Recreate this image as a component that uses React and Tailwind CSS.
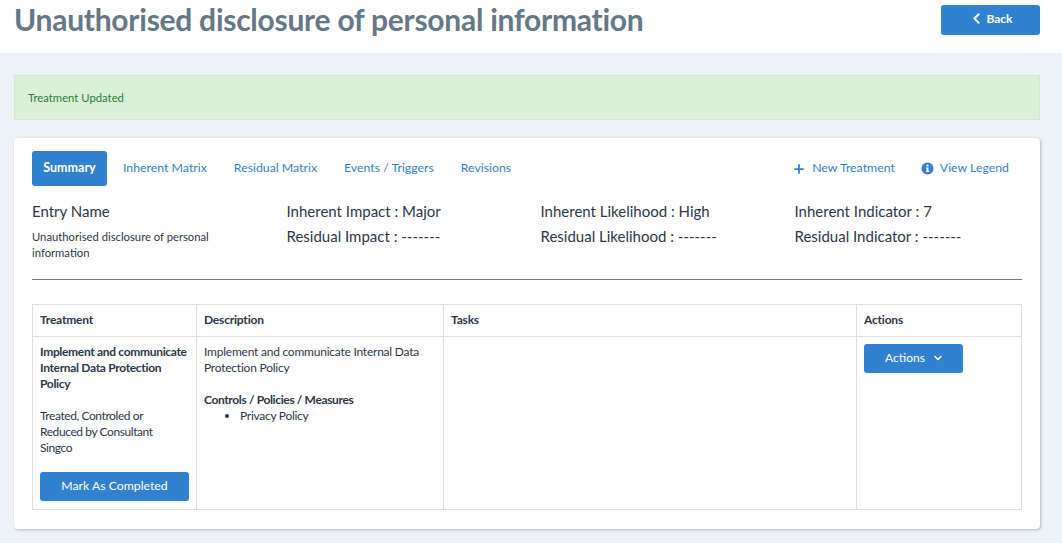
import { ChevronLeft, ChevronDown, Plus } from "lucide-react";

const InfoIcon = () => (
  <svg width="13" height="13" viewBox="0 0 13 13" className="mt-[2px] shrink-0">
    <circle cx="6.5" cy="6.5" r="6" fill="#3182ce" />
    <rect x="5.6" y="2.6" width="1.9" height="1.9" fill="#fff" />
    <path d="M4.9 5.5h2.6v3.3h.8v1.1H4.9V8.8h.8V6.6h-.8z" fill="#fff" />
  </svg>
);

const TabLink = ({ children, className = "" }) => (
  <a className={"h-[35px] flex items-center pb-[2px] text-[12.3px] text-[#3182ce] " + className}>{children}</a>
);

const App = () => {
  return (
    <div className="h-[543px] overflow-hidden bg-[#edf2f7] text-[12px] leading-4 text-[#2d3748] font-['Lato','Liberation_Sans',sans-serif]">
      <header className="h-[53px] bg-white pl-[14px] pr-[22px] flex items-start justify-between">
        <h1 className="text-[30px] leading-[38px] font-bold tracking-[-0.26px] text-[#667785]">Unauthorised disclosure of personal information</h1>
        <button className="mt-[5px] w-[99px] h-[30px] pb-[3px] rounded-[3px] bg-[#3182ce] text-white font-bold flex items-center justify-center gap-[1px]">
          <ChevronLeft size={17} strokeWidth={2.75} />
          Back
        </button>
      </header>

      <main className="pt-[22px] px-[14px] pr-[22px]">
        <div className="h-[45px] flex items-center px-[13px] bg-[#daf0d8] border border-[#cfe9cc] text-[#2f7d32] text-[11.3px]">
          Treatment Updated
        </div>

        <section className="mt-[18px] h-[391px] rounded-[4px] bg-white shadow-[1px_1px_3px_rgba(0,0,0,0.25)] px-[18px] pt-[13px]">
          <nav className="flex items-center">
            <a className="h-[35px] w-[75px] pb-[2px] rounded-[3px] bg-[#3182ce] text-[12.5px] text-white font-bold flex items-center justify-center">Summary</a>
            <TabLink className="ml-[16px]">Inherent Matrix</TabLink>
            <TabLink className="ml-[27px]">Residual Matrix</TabLink>
            <TabLink className="ml-[27px]">Events / Triggers</TabLink>
            <TabLink className="ml-[27px]">Revisions</TabLink>
            <TabLink className="ml-auto gap-[6px]">
              <Plus size={14} strokeWidth={3} className="mt-[2px]" />
              New Treatment
            </TabLink>
            <TabLink className="ml-[26px] mr-[13px] gap-[6px]">
              <InfoIcon />
              View Legend
            </TabLink>
          </nav>

          <div className="mt-[13px] grid grid-cols-[254.5px_254px_254px_1fr] text-[15px] leading-[25px] h-[69px]">
            <div>
              <div>Entry Name</div>
              <div className="mt-[5px] w-[200px] text-[11.25px] leading-4">Unauthorised disclosure of personal information</div>
            </div>
            <div>
              <div>Inherent Impact : Major</div>
              <div>Residual Impact : -------</div>
            </div>
            <div>
              <div>Inherent Likelihood : High</div>
              <div>Residual Likelihood : -------</div>
            </div>
            <div>
              <div>Inherent Indicator : 7</div>
              <div>Residual Indicator : -------</div>
            </div>
          </div>

          <hr className="mt-[11px] border-t border-[#777]" />

          <table className="mt-[24px] w-[990px] table-fixed border-collapse">
            <thead>
              <tr className="h-[32px] font-bold text-left tracking-[-0.2px]">
                <th className="w-[164px] border border-[#dcdfe3] px-[7px] pb-[2px]">Treatment</th>
                <th className="w-[247px] border border-[#dcdfe3] px-[7px] pb-[2px]">Description</th>
                <th className="w-[413px] border border-[#dcdfe3] px-[7px] pb-[2px]">Tasks</th>
                <th className="border border-[#dcdfe3] px-[7px] pb-[2px]">Actions</th>
              </tr>
            </thead>
            <tbody>
              <tr className="h-[173px] align-top">
                <td className="border border-[#dcdfe3] px-[7px] pt-[7px]">
                  <div className="font-bold tracking-[-0.32px]">Implement and communicate Internal Data Protection Policy</div>
                  <div className="mt-4 w-[125px] tracking-[-0.42px]">Treated, Controled or Reduced by Consultant Singco</div>
                  <button className="mt-4 w-[149px] h-[29px] pb-[2px] rounded-[3px] bg-[#3182ce] text-[12.25px] text-white">Mark As Completed</button>
                </td>
                <td className="border border-[#dcdfe3] px-[7px] pt-[7px]">
                  <div className="tracking-[-0.23px]">Implement and communicate Internal Data Protection Policy</div>
                  <div className="mt-4 font-bold tracking-[-0.37px]">Controls / Policies / Measures</div>
                  <ul className="list-disc pl-9 tracking-[-0.28px]">
                    <li>Privacy Policy</li>
                  </ul>
                </td>
                <td className="border border-[#dcdfe3] px-[7px] pt-[7px]"></td>
                <td className="border border-[#dcdfe3] px-[7px] pt-[7px]">
                  <button className="w-[99px] h-[29px] pl-[2px] pb-[2px] rounded-[3px] bg-[#3182ce] text-white flex items-center justify-center gap-[7px]">
                    Actions
                    <ChevronDown size={12} strokeWidth={3} />
                  </button>
                </td>
              </tr>
            </tbody>
          </table>
        </section>
      </main>
    </div>
  );
};

export default App;
